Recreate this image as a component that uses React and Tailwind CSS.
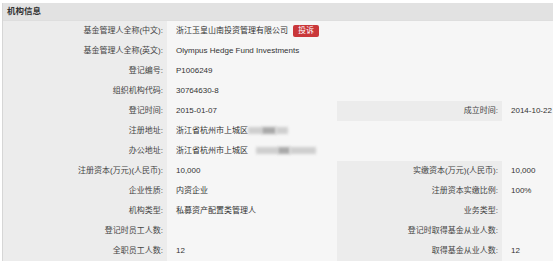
import React from "react";

const font = { fontFamily: '"Liberation Sans", "Noto Sans CJK SC", sans-serif' };

const Blur = ({ w, dark }) => (
  <span className={`inline-block h-[7px] align-middle blur-[1.5px] ${dark ? "bg-[#a9a9a9]" : "bg-[#cfcfcf]"}`} style={{ width: w }} />
);

const Label = ({ children }) => (
  <div className="bg-[#ececec] text-right pr-[4px] text-[#444] whitespace-nowrap">{children}</div>
);

const Value = ({ children }) => (
  <div className="bg-[#f6f6f6] pl-[9px] text-[#333] whitespace-nowrap flex items-center gap-[4px]">{children}</div>
);

const FullRow = ({ label, children }) => (
  <div className="grid grid-cols-[164px_1fr] h-[20px] leading-[20px] border-t border-[#dedede]">
    <Label>{label}</Label>
    <Value>{children}</Value>
  </div>
);

const SplitRow = ({ label, value, label2, value2 }) => (
  <div className="grid grid-cols-[164px_170px_165px_1fr] h-[20px] leading-[20px] border-t border-[#dedede]">
    <Label>{label}</Label>
    <Value>{value}</Value>
    <Label>{label2}</Label>
    <Value>{value2}</Value>
  </div>
);

export default function App() {
  return (
    <div className="w-[558px] h-[265px] bg-white pt-[3px] pl-[2px]" style={font}>
      <div className="w-[551px] text-[8px] border-l border-[#d6d6d6]">
        <div className="h-[17px] leading-[17px] bg-[#e2e2e2] pl-[4px] font-bold text-[8.5px] text-[#333]">机构信息</div>
        <FullRow label="基金管理人全称(中文):">
          浙江玉皇山南投资管理有限公司
          <span className="ml-[1px] h-[12px] leading-[12px] px-[5px] rounded-[2px] bg-[#c9373a] text-white text-[8px]">投诉</span>
        </FullRow>
        <FullRow label="基金管理人全称(英文):">Olympus Hedge Fund Investments</FullRow>
        <FullRow label="登记编号:">P1006249</FullRow>
        <FullRow label="组织机构代码:">30764630-8</FullRow>
        <SplitRow label="登记时间:" value="2015-01-07" label2="成立时间:" value2="2014-10-22" />
        <FullRow label="注册地址:">
          <span>
            浙江省杭州市上城区
            <Blur w={14} />
            <Blur w={14} dark />
            <Blur w={12} />
          </span>
        </FullRow>
        <FullRow label="办公地址:">
          <span>
            浙江省杭州市上城区
            <span className="inline-block w-[8px]" />
            <Blur w={22} />
            <Blur w={12} dark />
            <Blur w={26} />
          </span>
        </FullRow>
        <SplitRow label="注册资本(万元)(人民币):" value="10,000" label2="实缴资本(万元)(人民币):" value2="10,000" />
        <SplitRow label="企业性质:" value="内资企业" label2="注册资本实缴比例:" value2="100%" />
        <SplitRow label="机构类型:" value="私募资产配置类管理人" label2="业务类型:" value2="" />
        <SplitRow label="登记时员工人数:" value="" label2="登记时取得基金从业人数:" value2="" />
        <SplitRow label="全职员工人数:" value="12" label2="取得基金从业人数:" value2="12" />
        <div className="border-t border-[#dedede]" />
      </div>
    </div>
  );
}
